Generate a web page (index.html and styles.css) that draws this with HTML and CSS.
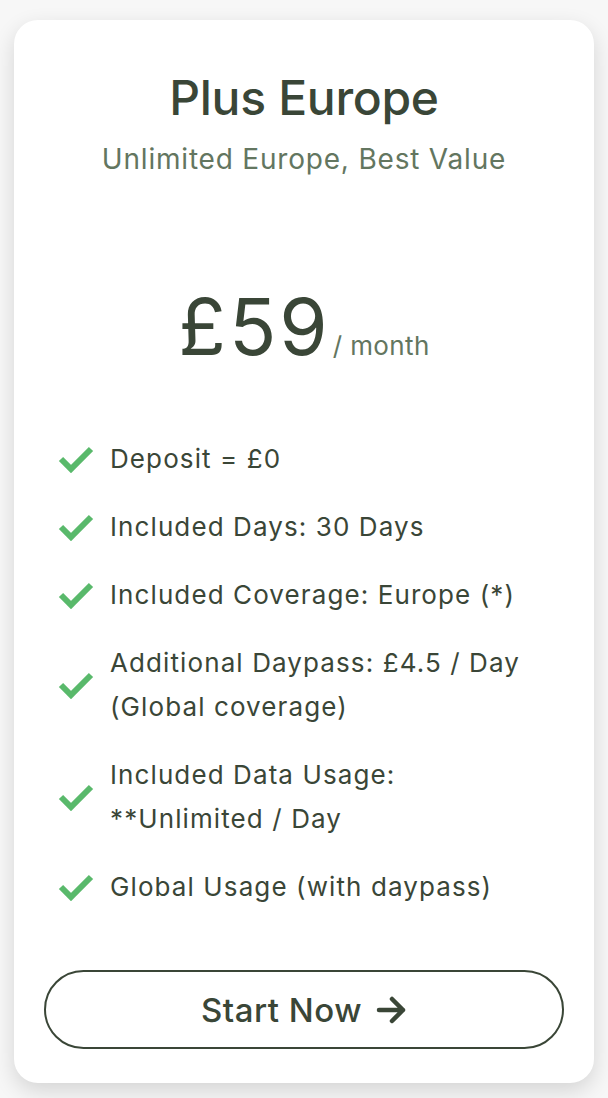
FILE: index.html
```html
<!DOCTYPE html>
<html lang="en">
<head>
  <meta charset="UTF-8" />
  <meta name="viewport" content="width=device-width, initial-scale=1.0"/>
  <title>Plus Europe</title>
  <link rel="stylesheet" href="styles.css">
</head>
<body>

<div class="card">
  <h2 class="plan-name">Plus Europe</h2>
  <p class="plan-tag">Unlimited Europe, Best Value</p>

  <div class="price">
    <span class="amount">£59</span><span class="period">/ month</span>
  </div>

  <ul class="features">
    <li><svg class="check" viewBox="0 0 36 28"><path d="M3 14 L13 24 L33 4"/></svg><span>Deposit = £0</span></li>
    <li><svg class="check" viewBox="0 0 36 28"><path d="M3 14 L13 24 L33 4"/></svg><span>Included Days: 30 Days</span></li>
    <li><svg class="check" viewBox="0 0 36 28"><path d="M3 14 L13 24 L33 4"/></svg><span>Included Coverage: Europe (*)</span></li>
    <li><svg class="check" viewBox="0 0 36 28"><path d="M3 14 L13 24 L33 4"/></svg><span>Additional Daypass: £4.5 / Day (Global coverage)</span></li>
    <li><svg class="check" viewBox="0 0 36 28"><path d="M3 14 L13 24 L33 4"/></svg><span>Included Data Usage: **Unlimited / Day</span></li>
    <li><svg class="check" viewBox="0 0 36 28"><path d="M3 14 L13 24 L33 4"/></svg><span>Global Usage (with daypass)</span></li>
  </ul>

  <a class="start-btn" href="#">Start Now
    <svg class="arrow" viewBox="0 0 31 28"><path d="M3 14 H27 M16 3 L27 14 L16 25"/></svg>
  </a>
</div>

</body>
</html>
```

FILE: styles.css
```css
body { font-family: Inter, "Noto Sans", sans-serif; margin: 0; background: #f7f7f7; color: #3a4637; }
.card { background: white; margin: 20px 14px 15px; border-radius: 24px; padding: 49px 30px 34px; box-shadow: 0 8px 22px rgba(0,0,0,0.14); text-align: center; }
.plan-name { font-size: 48px; font-weight: 500; margin: 0; line-height: 58px; letter-spacing: -0.3px; }
.plan-tag { font-size: 28px; color: #637660; margin: 15px 0 0; line-height: 34px; letter-spacing: 0.8px; }
.price { margin-top: 111px; display: flex; justify-content: center; align-items: baseline; }
.amount { font-size: 78px; line-height: 80px; letter-spacing: 3px; }
.period { font-size: 26px; color: #637660; margin-left: 2px; letter-spacing: 0.4px; }
.features { list-style: none; padding: 0; margin: 70px 24px 0 14px; text-align: left; display: flex; flex-direction: column; gap: 24px; }
.features li { display: flex; align-items: center; font-size: 26px; line-height: 44px; letter-spacing: 1.1px; }
.check { width: 36px; height: 28px; flex: none; margin-right: 16px; fill: none; stroke: #59b96b; stroke-width: 6; }
.start-btn { box-sizing: border-box; display: flex; justify-content: center; align-items: center; height: 79px; border: 2px solid #3a4637; border-radius: 40px; color: #3a4637; text-decoration: none; font-size: 33px; font-weight: 500; letter-spacing: 0.5px; margin-top: 61px; }
.arrow { width: 31px; height: 28px; margin-left: 14px; fill: none; stroke: #3a4637; stroke-width: 4.5; stroke-linecap: round; stroke-linejoin: round; }
```
